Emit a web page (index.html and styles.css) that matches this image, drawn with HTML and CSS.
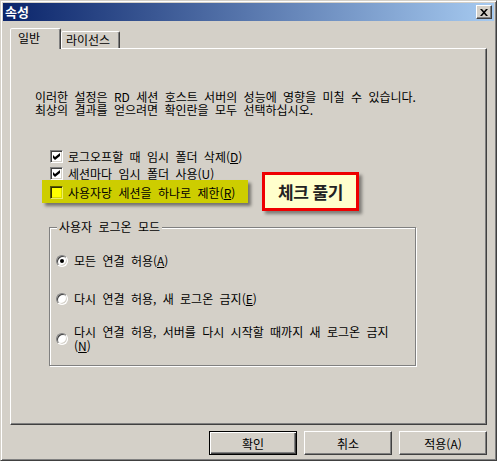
FILE: index.html
```html
<!DOCTYPE html>
<html lang="ko">
<head>
<meta charset="utf-8">
<title>속성</title>
<link rel="stylesheet" href="styles.css">
</head>
<body>
<div class="window">
  <div class="titlebar">
    <span class="title">속성</span>
    <span class="close"><svg width="8" height="7" viewBox="0 0 8 7"><path d="M0 0h2l2 2.2L6 0h2L5 3.5 8 7H6L4 4.8 2 7H0l3-3.5z" fill="#000"/></svg></span>
  </div>
  <div class="content">
    <div class="tabs">
      <div class="tab active">일반</div>
      <div class="tab">라이선스</div>
    </div>
    <div class="panel">
      <p class="desc">이러한 설정은 RD 세션 호스트 서버의 성능에 영향을 미칠 수 있습니다.<br>최상의 결과를 얻으려면 확인란을 모두 선택하십시오.</p>
      <div class="checks">
        <div class="check"><span class="box"><svg width="7" height="7" viewBox="0 0 7 7"><path d="M0 2l2 2 5-4v3L2 7 0 5z" fill="#000"/></svg></span><span>로그오프할 때 임시 폴더 삭제(<u>D</u>)</span></div>
        <div class="check"><span class="box"><svg width="7" height="7" viewBox="0 0 7 7"><path d="M0 2l2 2 5-4v3L2 7 0 5z" fill="#000"/></svg></span><span>세션마다 임시 폴더 사용(<u>U</u>)</span></div>
        <div class="check hl"><span class="box yellow"></span><span>사용자당 세션을 하나로 제한(<u>R</u>)</span></div>
      </div>
      <fieldset class="group">
        <legend>사용자 로그온 모드</legend>
        <div class="radio r1"><span class="dot on"></span><span>모든 연결 허용(<u>A</u>)</span></div>
        <div class="radio r2"><span class="dot"></span><span>다시 연결 허용, 새 로그온 금지(<u>E</u>)</span></div>
        <div class="radio r3"><span class="dot"></span><span>다시 연결 허용, 서버를 다시 시작할 때까지 새 로그온 금지<br>(<u>N</u>)</span></div>
      </fieldset>
      <div class="callout">체크 풀기</div>
    </div>
    <div class="buttons">
      <span class="btn default">확인</span>
      <span class="btn">취소</span>
      <span class="btn">적용(A)</span>
    </div>
  </div>
</div>
</body>
</html>
```
FILE: styles.css
```css
* { box-sizing: border-box; }
html, body { margin: 0; padding: 0; background: #d4d0c8; }
body {
  font-family: "Noto Sans CJK KR", "Noto Sans", sans-serif;
  font-size: 12px;
  word-spacing: 3px;
  color: #000;
}
.window {
  width: 497px;
  height: 461px;
  border: 1px solid;
  border-color: #d4d0c8 #404040 #404040 #d4d0c8;
  box-shadow: inset 1px 1px 0 #fff, inset -1px -1px 0 #808080;
  padding: 2px;
  display: flex;
  flex-direction: column;
  background: #d4d0c8;
}
.titlebar {
  height: 18px;
  display: flex;
  align-items: center;
  justify-content: space-between;
  padding: 0 2px 0 2px;
  background: linear-gradient(to right, #0a246a, #a6caf0);
}
.title {
  color: #fff;
  font-weight: bold;
  font-size: 13px;
  line-height: 18px;
}
.close {
  width: 16px;
  height: 14px;
  background: #d4d0c8;
  border: 1px solid;
  border-color: #fff #404040 #404040 #fff;
  box-shadow: inset -1px -1px 0 #808080;
  display: flex;
  align-items: center;
  justify-content: center;
}
.content {
  flex: 1;
  display: flex;
  flex-direction: column;
  padding: 7px 7px 0 7px;
}
.tabs {
  height: 20px;
  display: flex;
  align-items: flex-end;
}
.tab {
  height: 17px;
  width: 59px;
  padding-left: 4px;
  line-height: 16px;
  border: 1px solid;
  border-bottom: none;
  border-color: #fff #404040 transparent #fff;
  box-shadow: inset -1px 0 0 #808080;
  border-radius: 2px 2px 0 0;
  background: #d4d0c8;
}
.tab.active {
  width: 51px;
  height: 21px;
  margin-bottom: -1px;
  padding-left: 7px;
  line-height: 17px;
  position: relative;
  z-index: 1;
}
.panel {
  height: 377px;
  position: relative;
  border: 1px solid;
  border-color: #fff #404040 #404040 #fff;
  box-shadow: inset -1px -1px 0 #808080;
  padding: 41px 0 0 24px;
}
.desc {
  margin: 0;
  line-height: 13px;
}
.checks {
  margin: 34px 0 0 15px;
  display: flex;
  flex-direction: column;
  gap: 4px;
}
.check {
  display: flex;
  align-items: center;
  gap: 5px;
  height: 13px;
  line-height: 13px;
  white-space: nowrap;
}
.box {
  width: 13px;
  height: 13px;
  flex: none;
  background: #fff;
  border: 1px solid;
  border-color: #808080 #fff #fff #808080;
  box-shadow: inset 1px 1px 0 #404040, inset -1px -1px 0 #d4d0c8;
  display: flex;
  align-items: center;
  justify-content: center;
}
.box.yellow {
  background: #ffff00;
  border-color: #5a5a00 #eeee66 #eeee66 #5a5a00;
  box-shadow: inset 1px 1px 0 #303000, inset -1px -1px 0 #d8d800;
}
.check.hl {
  height: 23px;
  width: 206px;
  margin: -4px 0 0 -8px;
  padding: 2px 8px 0 8px;
  background: #cdcd00;
  box-shadow: 3px 3px 3px rgba(0, 0, 0, 0.45);
}
.group {
  margin: 17px 0 0 14px;
  width: 367px;
  padding: 0 6px 12px 6px;
  border: 1px solid #808080;
  box-shadow: inset 1px 1px 0 #fff, 1px 1px 0 #fff;
  min-width: 0;
}
.group legend {
  padding: 0 2px;
  margin-left: 1px;
  line-height: 14px;
  background: #d4d0c8;
}
.radio {
  display: flex;
  align-items: center;
  gap: 6px;
  line-height: 14px;
}
.r1 { margin-top: 20px; }
.r2 { margin-top: 24px; }
.r3 { margin-top: 19px; }
.dot {
  width: 12px;
  height: 12px;
  flex: none;
  border-radius: 50%;
  background: #fff;
  border: 1px solid;
  border-color: #808080 #fff #fff #808080;
  box-shadow: inset 1px 1px 0 #404040, inset -1px -1px 0 #d4d0c8;
  display: flex;
  align-items: center;
  justify-content: center;
}
.dot.on::after {
  content: "";
  width: 4px;
  height: 4px;
  border-radius: 50%;
  background: #000;
}
.callout {
  position: absolute;
  left: 251px;
  top: 123px;
  width: 97px;
  height: 39px;
  border: 3px solid #ee0000;
  background: #ffffcc;
  box-shadow: 3px 3px 3px rgba(0, 0, 0, 0.4);
  display: flex;
  align-items: center;
  justify-content: center;
  font-weight: bold;
  font-size: 17px;
  word-spacing: 0;
  color: #222;
  letter-spacing: -0.5px;
}
.buttons {
  margin-top: 6px;
  display: flex;
  justify-content: flex-end;
  gap: 7px;
}
.btn {
  width: 88px;
  height: 24px;
  display: flex;
  align-items: center;
  justify-content: center;
  border: 1px solid;
  border-color: #fff #404040 #404040 #fff;
  box-shadow: inset -1px -1px 0 #808080;
  background: #d4d0c8;
}
.btn.default {
  border-color: #000;
  box-shadow: inset 1px 1px 0 #fff, inset -1px -1px 0 #404040, inset -2px -2px 0 #808080;
}
```
